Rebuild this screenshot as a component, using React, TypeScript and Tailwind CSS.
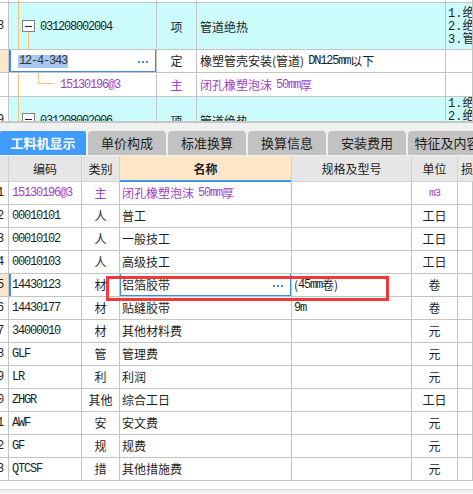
import React from "react";

const MONO = "font-['Liberation_Mono','Noto_Sans_CJK_SC',monospace] tracking-[-1.2px]";
const CJK = "font-['Noto_Sans_CJK_SC',sans-serif]";
const CELL = "border-r border-b border-[#c4c4c4] overflow-hidden relative shrink-0";
const TREE = "absolute bg-[#f7c37c]";
const PURPLE = "text-[#a13fc2]";

function Dots() {
  return (
    <div className="flex gap-[2px]">
      <div className="w-[2px] h-[2px] bg-[#3a8ee6]" />
      <div className="w-[2px] h-[2px] bg-[#3a8ee6]" />
      <div className="w-[2px] h-[2px] bg-[#3a8ee6]" />
    </div>
  );
}

function MinusBox({ top }: { top: number }) {
  return (
    <div
      className="absolute left-[13px] w-[13px] h-[12px] border border-[#808080] bg-white flex items-center justify-center"
      style={{ top }}
    >
      <div className="w-[7px] h-px bg-[#222]" />
    </div>
  );
}

function NumCell({ n, bg, w }: { n: string; bg: string; w: string }) {
  return (
    <div className={`${CELL} ${w} ${bg} flex items-center justify-end ${MONO} text-[12px] text-[#222]`}>
      <span className="mr-[5px] whitespace-nowrap">{n}</span>
    </div>
  );
}

type Row = {
  n: string;
  code: string;
  type: string;
  name: string;
  spec?: string;
  unit: string;
  purple?: boolean;
  current?: boolean;
};

const rows: Row[] = [
  { n: "1", code: "15130196@3", type: "主", name: "闭孔橡塑泡沫 50mm厚", unit: "m3", purple: true },
  { n: "2", code: "00010101", type: "人", name: "普工", unit: "工日" },
  { n: "3", code: "00010102", type: "人", name: "一般技工", unit: "工日" },
  { n: "4", code: "00010103", type: "人", name: "高级技工", unit: "工日" },
  { n: "5", code: "14430123", type: "材", name: "铝箔胶带", spec: "(45mm卷)", unit: "卷", current: true },
  { n: "6", code: "14430177", type: "材", name: "贴缝胶带", spec: "9m", unit: "卷" },
  { n: "7", code: "34000010", type: "材", name: "其他材料费", unit: "元" },
  { n: "8", code: "GLF", type: "管", name: "管理费", unit: "元" },
  { n: "9", code: "LR", type: "利", name: "利润", unit: "元" },
  { n: "10", code: "ZHGR", type: "其他", name: "综合工日", unit: "工日" },
  { n: "11", code: "AWF", type: "安", name: "安文费", unit: "元" },
  { n: "12", code: "GF", type: "规", name: "规费", unit: "元" },
  { n: "13", code: "QTCSF", type: "措", name: "其他措施费", unit: "元" },
];

const tabs = ["单价构成", "标准换算", "换算信息", "安装费用", "特征及内容"];

export default function App() {
  return (
    <div className={`relative w-[473px] h-[494px] overflow-hidden bg-white text-[12px] text-[#1e1e1e] ${CJK}`}>
      {/* top table */}
      <div className="h-[121px] overflow-hidden">
        {/* partial row */}
        <div className="flex h-[3px]">
          <div className={`${CELL} w-[9px]`} />
          <div className={`${CELL} w-[148px]`}>
            <span className={`${TREE} left-[9px] top-0 bottom-0 w-px`} />
          </div>
          <div className={`${CELL} w-[40px]`} />
          <div className={`${CELL} w-[249px]`} />
          <div className={`${CELL} flex-1`} />
        </div>
        {/* row 1 */}
        <div className="flex h-[47px]">
          <NumCell n="8" bg="bg-white" w="w-[9px]" />
          <div className={`${CELL} w-[148px] bg-[#cbfbfa] flex items-center`}>
            <span className={`${TREE} left-[9px] top-0 bottom-0 w-px`} />
            <span className={`${TREE} left-[19px] top-[29px] bottom-0 w-px`} />
            <MinusBox top={17} />
            <span className={`${MONO} pl-[31px] pt-[2px]`}>031208002004</span>
          </div>
          <div className={`${CELL} w-[40px] bg-[#cbfbfa] flex items-center justify-center pt-[2px]`}>项</div>
          <div className={`${CELL} w-[249px] bg-[#cbfbfa] flex items-center pl-[3px] pt-[2px]`}>管道绝热</div>
          <div className={`${CELL} flex-1 bg-[#cbfbfa] pl-[2px] pt-[5px] leading-[13px] whitespace-nowrap ${MONO} tracking-normal`}>
            <div>1.绝热材料品种</div>
            <div>2.绝热厚度</div>
            <div>3.管道外径</div>
          </div>
        </div>
        {/* row 2 */}
        <div className="flex h-[23px]">
          <NumCell n="" bg="bg-[#fde6c9]" w="w-[9px]" />
          <div className={`${CELL} w-[148px] bg-white flex items-center`}>
            <div className="absolute left-0 top-[-1px] right-0 bottom-0 border border-l-2 border-[#3a8ee6]" />
            <span className={`${MONO} ml-[9px] bg-[#a9c8ef] text-[#333] leading-[13px] px-px`}>12-4-343</span>
            <div className="absolute right-[8px] top-[11px]">
              <Dots />
            </div>
          </div>
          <div className={`${CELL} w-[40px] flex items-center justify-center`}>定</div>
          <div className={`${CELL} w-[249px] flex items-center pl-[3px] whitespace-nowrap`}>
            橡塑管壳安装(管道) <span className={`${MONO} ml-[4px]`}>DN125mm</span>以下
          </div>
          <div className={`${CELL} flex-1`} />
        </div>
        {/* row 3 */}
        <div className="flex h-[24px]">
          <NumCell n="" bg="bg-white" w="w-[9px]" />
          <div className={`${CELL} w-[148px] flex items-center`}>
            <span className={`${TREE} left-[9px] top-0 bottom-0 w-px`} />
            <span className={`${TREE} left-[29px] top-0 h-[11px] w-px`} />
            <span className={`${TREE} left-[29px] top-[10px] w-[16px] h-px`} />
            <span className={`${MONO} ${PURPLE} pl-[51px]`}>15130196@3</span>
          </div>
          <div className={`${CELL} w-[40px] flex items-center justify-center ${PURPLE}`}>主</div>
          <div className={`${CELL} w-[249px] flex items-center pl-[3px] whitespace-nowrap ${PURPLE}`}>
            闭孔橡塑泡沫 <span className={`${MONO} ml-[4px]`}>50mm</span>厚
          </div>
          <div className={`${CELL} flex-1`} />
        </div>
        {/* row 4 */}
        <div className="flex h-[47px]">
          <NumCell n="9" bg="bg-white" w="w-[9px]" />
          <div className={`${CELL} w-[148px] bg-[#cbfbfa] flex items-center`}>
            <span className={`${TREE} left-[9px] top-0 bottom-0 w-px`} />
            <MinusBox top={16} />
            <span className={`${MONO} pl-[31px] pt-[2px]`}>031208002006</span>
          </div>
          <div className={`${CELL} w-[40px] bg-[#cbfbfa] flex items-center justify-center pt-[2px]`}>项</div>
          <div className={`${CELL} w-[249px] bg-[#cbfbfa] flex items-center pl-[3px] pt-[2px]`}>管道绝热</div>
          <div className={`${CELL} flex-1 bg-[#cbfbfa] pl-[2px] pt-[1px] leading-[13px] whitespace-nowrap ${MONO} tracking-normal`}>
            <div>1.绝热材料品种</div>
            <div>2.绝热厚度</div>
            <div>3.管道外径</div>
          </div>
        </div>
      </div>

      {/* scroll band */}
      <div className="h-[2px] bg-[#c6c6c6]" />
      <div className="h-[8px] bg-[#f0f0f0]" />

      {/* tabs */}
      <div className="h-[24px] bg-[#f0f0f0] flex gap-[2px] overflow-hidden">
        <div className="w-[86px] shrink-0 bg-[#3f9cfc] text-white font-bold text-[13px] flex items-center justify-center rounded-t-[2px]">
          工料机显示
        </div>
        {tabs.map((t) => (
          <div
            key={t}
            className="w-[78px] shrink-0 bg-[#c2c2c2] text-[#1e1e1e] text-[13px] flex items-center justify-center rounded-t-[4px] whitespace-nowrap"
          >
            {t}
          </div>
        ))}
      </div>
      <div className="h-px bg-[#f0f0f0]" />

      {/* header */}
      <div className="flex h-[26px] bg-[#e6e6e6]">
        <div className="w-[9px] shrink-0 border-r border-b border-[#d0d0d0]" />
        <div className="w-[73px] shrink-0 border-r border-b border-[#d0d0d0] flex items-center justify-center">编码</div>
        <div className="w-[38px] shrink-0 border-r border-b border-[#d0d0d0] flex items-center justify-center">类别</div>
        <div className="w-[172px] shrink-0 border-r border-[#d0d0d0] bg-[#fee6c9] font-bold flex items-center justify-center relative">
          名称
          <div className="absolute left-0 right-0 bottom-0 h-[2px] bg-[#3f95f0]" />
        </div>
        <div className="w-[120px] shrink-0 border-r border-b border-[#d0d0d0] flex items-center justify-center">规格及型号</div>
        <div className="w-[46px] shrink-0 border-r border-b border-[#d0d0d0] flex items-center justify-center">单位</div>
        <div className="flex-1 border-b border-[#d0d0d0] flex items-center pl-[3px] whitespace-nowrap overflow-hidden">损耗率</div>
      </div>

      {/* rows */}
      {rows.map((r) => {
        const color = r.purple ? PURPLE : "";
        return (
          <div key={r.n} className={`flex h-[23px] ${color}`}>
            <NumCell n={r.n} bg={r.current ? "bg-[#fde6c9]" : "bg-white"} w="w-[9px]" />
            <div className={`${CELL} w-[73px] flex items-center pl-[3px]`}>
              {r.current && <div className="absolute left-0 top-0 bottom-0 w-[2px] bg-[#3a8ee6]" />}
              <span className={`${MONO} whitespace-nowrap`}>{r.code}</span>
            </div>
            <div className={`${CELL} w-[38px] flex items-center justify-center`}>{r.type}</div>
            <div className={`${CELL} w-[172px] flex items-center pl-[2px] whitespace-nowrap`}>
              {r.current && <div className="absolute left-0 top-[-1px] right-0 bottom-0 border border-[#3a8ee6]" />}
              {r.purple ? (
                <>
                  闭孔橡塑泡沫 <span className={`${MONO} ml-[4px]`}>50mm</span>厚
                </>
              ) : (
                r.name
              )}
              {r.current && (
                <div className="absolute right-[8px] top-[11px]">
                  <Dots />
                </div>
              )}
            </div>
            <div className={`${CELL} w-[120px] flex items-center pl-[2px] whitespace-nowrap`}>
              {r.spec === "(45mm卷)" ? (
                <>
                  (<span className={MONO}>45mm</span>卷)
                </>
              ) : r.spec ? (
                <span className={MONO}>{r.spec}</span>
              ) : null}
            </div>
            <div className={`${CELL} w-[46px] flex items-center justify-center`}>
              {r.unit === "m3" ? <span className={`${MONO} text-[11px]`}>m3</span> : r.unit}
            </div>
            <div className={`${CELL} flex-1`} />
          </div>
        );
      })}

      <div className="h-[8px] bg-white" />
      <div className="h-[20px] bg-[#f0f0f0] border-t border-[#dcdcdc]" />

      {/* red highlight box */}
      <div className="absolute left-[106px] top-[276px] w-[283px] h-[25px] border-[3px] border-[#f23838]" />
    </div>
  );
}
